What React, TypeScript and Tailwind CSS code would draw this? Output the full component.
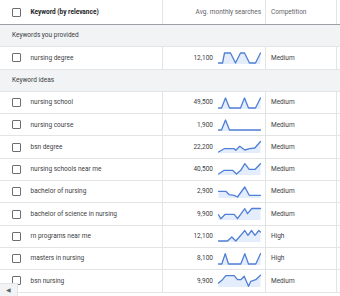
import React from 'react';

type Pt = [number, number];

interface KeywordRow {
  keyword: string;
  searches: string;
  competition: string;
  trend: Pt[];
}

const PROVIDED: KeywordRow[] = [
  {
    keyword: 'nursing degree',
    searches: '12,100',
    competition: 'Medium',
    trend: [[0, 11], [4, 11], [6, 1], [12, 1], [17, 11], [22, 1], [26, 1], [31, 11], [37, 11], [42, 1]],
  },
];

const IDEAS: KeywordRow[] = [
  {
    keyword: 'nursing school',
    searches: '49,500',
    competition: 'Medium',
    trend: [[0, 11], [3, 11], [7, 1], [11, 11], [22, 11], [26, 1], [30, 11], [37, 11], [42, 1]],
  },
  {
    keyword: 'nursing course',
    searches: '1,900',
    competition: 'Medium',
    trend: [[0, 11], [3, 11], [7, 1], [11, 11], [42, 11]],
  },
  {
    keyword: 'bsn degree',
    searches: '22,200',
    competition: 'Medium',
    trend: [[0, 11], [5.7, 7.7], [15.7, 7.7], [17.3, 9.3], [21.3, 5.3], [26.3, 9], [31.3, 7.7], [36.3, 7], [42, 0.5]],
  },
  {
    keyword: 'nursing schools near me',
    searches: '40,500',
    competition: 'Medium',
    trend: [[0, 11], [5.7, 7.3], [14, 7.3], [18, 11], [22.3, 7.3], [26.3, 0.7], [30.7, 6.3], [36.7, 6.3], [42, 0.7]],
  },
  {
    keyword: 'bachelor of nursing',
    searches: '2,900',
    competition: 'Medium',
    trend: [[0, 5.3], [7.3, 5.3], [10.7, 8.7], [15.7, 9.3], [19, 11], [26.3, 1], [30.7, 9.3], [42, 9.3]],
  },
  {
    keyword: 'bachelor of science in nursing',
    searches: '9,900',
    competition: 'Medium',
    trend: [[0, 6.7], [2.3, 10.7], [6.7, 6.3], [15.7, 6.3], [19, 10.7], [26.3, 0.7], [29, 5.7], [33.3, 0.5], [42, 0.5]],
  },
  {
    keyword: 'rn programs near me',
    searches: '12,100',
    competition: 'High',
    trend: [[0, 11], [9, 11], [13.3, 7], [17.3, 11], [22.3, 5.3], [26.3, 0.5], [29.5, 5.3], [33, 0.5], [36.5, 5.3], [40.3, 0.5], [42, 2]],
  },
  {
    keyword: 'masters in nursing',
    searches: '8,100',
    competition: 'High',
    trend: [[0, 11], [3.3, 11], [6.7, 0.7], [10, 11], [22.3, 11], [26.3, 0.7], [30, 11], [37.3, 11], [42, 0.7]],
  },
  {
    keyword: 'bsn nursing',
    searches: '9,900',
    competition: 'Medium',
    trend: [[0, 8], [4, 4.7], [7.3, 0.7], [15.7, 0.7], [19, 4.7], [22.3, 4.7], [25.7, 1.3], [30, 11.3], [32.3, 6.3], [37.3, 4.7], [42, 0.3]],
  },
];

function Sparkline({ points }: { points: Pt[] }) {
  const line = points.map(([x, y]) => `${x},${y}`).join(' ');
  const first = points[0];
  const last = points[points.length - 1];
  const area = `${first[0]},12 ${line} ${last[0]},12`;
  return (
    <svg width={43} height={12} viewBox="-0.5 0 43 12" className="shrink-0 overflow-visible">
      <polygon points={area} fill="#e4edfc" />
      <polyline
        points={line}
        fill="none"
        stroke="#4f7fd6"
        strokeWidth={1.3}
        strokeLinejoin="round"
        strokeLinecap="round"
      />
    </svg>
  );
}

function Checkbox() {
  return <span className="block w-[9px] h-[9px] shrink-0 rounded-[1px] border-[1.5px] border-[#6b6e72] bg-white" />;
}

function GroupRow({ label }: { label: string }) {
  return (
    <div className="h-[22.3px] flex items-center pl-[12px] bg-[#f1f3f4] border-b border-[#e3e4e6] text-[#3c4043]">
      {label}
    </div>
  );
}

function Row({ row }: { row: KeywordRow }) {
  return (
    <div className="h-[22.3px] flex border-b border-[#e3e4e6] text-[#3c4043]">
      <div className="w-[163px] flex items-center gap-[10px] pl-[11.5px] border-r border-[#e3e4e6]">
        <Checkbox />
        <span>{row.keyword}</span>
      </div>
      <div className="w-[103px] flex items-center justify-end gap-[5px] pr-[4px] border-r border-[#e3e4e6]">
        <span>{row.searches}</span>
        <Sparkline points={row.trend} />
      </div>
      <div className="w-[71px] flex items-center pl-[5px] border-r border-[#e3e4e6]">{row.competition}</div>
      <div className="flex-1" />
    </div>
  );
}

export default function App() {
  return (
    <div
      className="relative w-[340px] h-[296px] overflow-hidden bg-white text-[6.5px] leading-none"
      style={{ fontFamily: 'Roboto, "Liberation Sans", sans-serif' }}
    >
      {/* Header */}
      <div className="h-[25px] flex border-b border-[#9aa0a6]">
        <div className="w-[163px] flex items-center gap-[10px] pl-[11.5px] border-r border-[#e3e4e6]">
          <Checkbox />
          <span className="font-bold text-[#202124]">Keyword (by relevance)</span>
        </div>
        <div className="w-[103px] flex items-center justify-end pr-[4px] border-r border-[#e3e4e6] text-[#5f6368]">
          Avg. monthly searches
        </div>
        <div className="w-[71px] flex items-center pl-[5px] border-r border-[#e3e4e6] text-[#5f6368]">
          Competition
        </div>
        <div className="flex-1" />
      </div>

      <GroupRow label="Keywords you provided" />
      {PROVIDED.map((r) => (
        <Row key={r.keyword} row={r} />
      ))}
      <GroupRow label="Keyword ideas" />
      {IDEAS.map((r) => (
        <Row key={r.keyword} row={r} />
      ))}

      {/* Horizontal scroll button */}
      <button className="absolute left-0 bottom-0 w-[18px] h-[13px] flex items-center justify-center bg-[#f1f3f4] border-t border-r border-[#e3e4e6] text-[#5f6368] text-[6px] leading-none">
        ◀
      </button>
    </div>
  );
}
